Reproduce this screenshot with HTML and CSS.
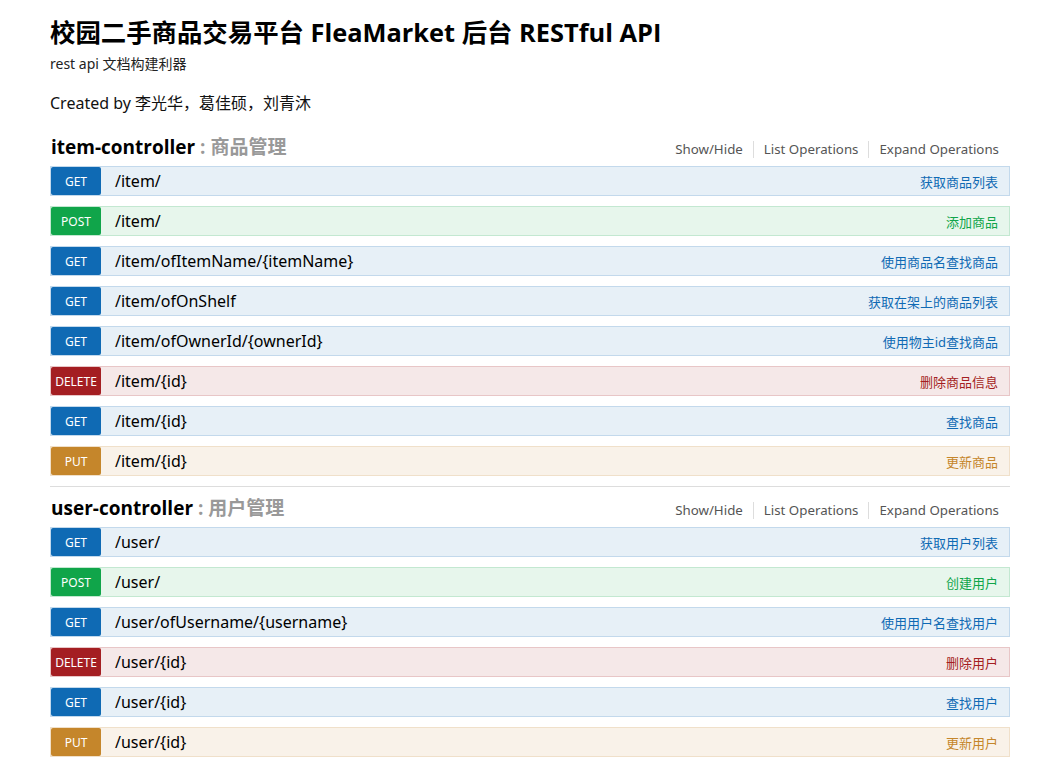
FILE: index.html
```html
<!DOCTYPE html>
<html lang="zh-CN">
<head>
<meta charset="utf-8">
<title>FleaMarket API</title>
<link rel="stylesheet" href="styles.css">
</head>
<body>
<div class="container">
  <div class="info">
    <h1 class="title">校园二手商品交易平台 FleaMarket 后台 RESTful API</h1>
    <div class="desc">rest api 文档构建利器</div>
    <div class="author">Created by 李光华，葛佳硕，刘青沐</div>
  </div>

  <section class="resource">
    <div class="res-head">
      <h2 class="res-name">item-controller <span class="res-desc">: 商品管理</span></h2>
      <ul class="res-links">
        <li>Show/Hide</li>
        <li>List Operations</li>
        <li>Expand Operations</li>
      </ul>
    </div>
    <ul class="ops">
      <li class="op get"><span class="verb">GET</span><span class="path">/item/</span><span class="sum">获取商品列表</span></li>
      <li class="op post"><span class="verb">POST</span><span class="path">/item/</span><span class="sum">添加商品</span></li>
      <li class="op get"><span class="verb">GET</span><span class="path">/item/ofItemName/{itemName}</span><span class="sum">使用商品名查找商品</span></li>
      <li class="op get"><span class="verb">GET</span><span class="path">/item/ofOnShelf</span><span class="sum">获取在架上的商品列表</span></li>
      <li class="op get"><span class="verb">GET</span><span class="path">/item/ofOwnerId/{ownerId}</span><span class="sum">使用物主id查找商品</span></li>
      <li class="op delete"><span class="verb">DELETE</span><span class="path">/item/{id}</span><span class="sum">删除商品信息</span></li>
      <li class="op get"><span class="verb">GET</span><span class="path">/item/{id}</span><span class="sum">查找商品</span></li>
      <li class="op put"><span class="verb">PUT</span><span class="path">/item/{id}</span><span class="sum">更新商品</span></li>
    </ul>
  </section>

  <section class="resource">
    <div class="res-head">
      <h2 class="res-name">user-controller <span class="res-desc">: 用户管理</span></h2>
      <ul class="res-links">
        <li>Show/Hide</li>
        <li>List Operations</li>
        <li>Expand Operations</li>
      </ul>
    </div>
    <ul class="ops">
      <li class="op get"><span class="verb">GET</span><span class="path">/user/</span><span class="sum">获取用户列表</span></li>
      <li class="op post"><span class="verb">POST</span><span class="path">/user/</span><span class="sum">创建用户</span></li>
      <li class="op get"><span class="verb">GET</span><span class="path">/user/ofUsername/{username}</span><span class="sum">使用用户名查找用户</span></li>
      <li class="op delete"><span class="verb">DELETE</span><span class="path">/user/{id}</span><span class="sum">删除用户</span></li>
      <li class="op get"><span class="verb">GET</span><span class="path">/user/{id}</span><span class="sum">查找用户</span></li>
      <li class="op put"><span class="verb">PUT</span><span class="path">/user/{id}</span><span class="sum">更新用户</span></li>
    </ul>
  </section>
</div>
</body>
</html>
```

FILE: styles.css
```css
* { box-sizing: border-box; }
html, body { margin: 0; padding: 0; background: #fff; }
body {
  font-family: "Noto Sans", "Open Sans", "Noto Sans CJK SC", sans-serif;
  color: #000;
}
.container {
  width: 960px;
  margin-left: 50px;
  padding-top: 14px;
}
.title {
  margin: 0;
  font-size: 25.4px;
  line-height: 36px;
  font-weight: 700;
  font-family: "Open Sans", "Noto Sans CJK SC", sans-serif;
}
.desc {
  margin-top: 4px;
  font-size: 14px;
  line-height: 20px;
  color: #222;
}
.author {
  margin-top: 18px;
  font-size: 16px;
  line-height: 22px;
  color: #111;
}
.resource {
  margin-top: 14px;
}
.resource + .resource {
  border-top: 1px solid #ddd;
  margin-top: 10px;
}
.res-head {
  display: flex;
  align-items: center;
  justify-content: space-between;
  height: 36px;
  margin-bottom: 2px;
  padding-left: 1px;
}
.resource + .resource .res-head { margin-top: 2px; }
.res-name {
  margin: 0;
  font-size: 19px;
  font-weight: 700;
  font-family: "Open Sans", "Noto Sans CJK SC", sans-serif;
}
.res-desc { color: #999; }
.res-links {
  list-style: none;
  margin: 6px 0 0 0;
  padding: 0;
  display: flex;
  font-size: 13.3px;
  color: #555;
}
.res-links li {
  padding: 0 10px;
  line-height: 17px;
  border-right: 1px solid #ddd;
}
.res-links li:last-child { border-right: none; padding-right: 11px; }
.ops {
  list-style: none;
  margin: 0;
  padding: 0;
  display: flex;
  flex-direction: column;
  gap: 10px;
}
.op {
  display: flex;
  align-items: center;
  height: 30px;
  border: 1px solid;
}
.verb {
  width: 50px;
  height: 28px;
  border-radius: 2px;
  color: #fff;
  font-size: 12px;
  padding-top: 1px;
  display: flex;
  align-items: center;
  justify-content: center;
  flex: none;
}
.path {
  flex: 1;
  padding-left: 14px;
  font-size: 16px;
  color: #000;
}
.sum {
  padding-right: 11px;
  font-size: 13px;
}
.get { background: #e7f0f7; border-color: #c3d9ec; }
.get .verb { background: #0f6ab4; }
.get .sum { color: #0f6ab4; }
.post { background: #e7f6ec; border-color: #c3e8d1; }
.post .verb { background: #10a54a; }
.post .sum { color: #10a54a; }
.delete { background: #f5e8e8; border-color: #e8c6c7; }
.delete .verb { background: #a41e22; }
.delete .sum { color: #a41e22; }
.put { background: #f9f2e9; border-color: #f0e0ca; }
.put .verb { background: #c5862b; }
.put .sum { color: #c5862b; }
```
